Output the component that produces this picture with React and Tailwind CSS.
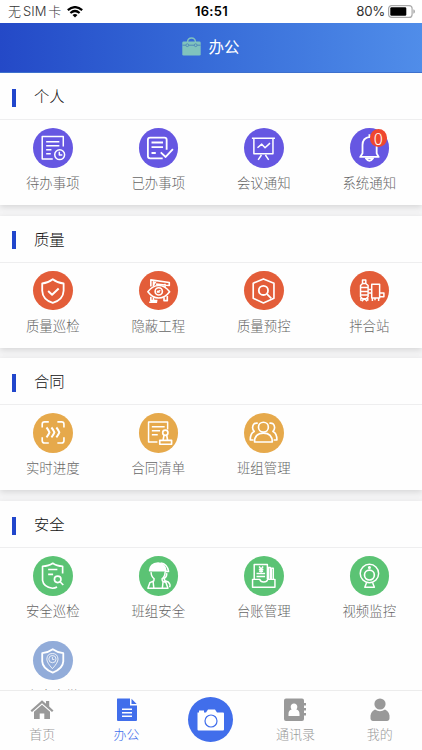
import React, { useState } from 'react';

// Every glyph is drawn on a 120x120 grid, inside its coloured disc
const glyphs = {
	todo: (
		<>
			<path d="M92 56V26H28v68h32M40 42h40M40 54h40M40 66h16M40 78h14" />
			<circle cx="81" cy="81" r="15" />
			<path d="M80 72v10h9" />
		</>
	),
	done: (
		<>
			<path
				d="M84 66V36q0-7-7-7H34q-7 0-7 7v49q0 7 7 7h38M38 44h35M38 58h35M38 76h13"
				strokeWidth="5.500"
			/>
			<path d="M66 74l15 14 22-24" strokeWidth="5.500" />
		</>
	),
	meeting: (
		<>
			<path d="M24 31h70M30 31v47h58V31M53 82L43 97M65 82l10 15" />
			<path d="M41 60l13-11 10 11 15-14" />
		</>
	),
	bell: (
		<>
			<path
				d="M31 88h56l-6-11V52q0-22-21-25-22 3-22 25v25zM59 27v-8"
				strokeWidth="5.500"
			/>
			<path d="M48 92q11 16 22 0z" strokeWidth="5.500" />
		</>
	),
	shieldCheck: (
		<>
			<path
				d="M60 25Q46 36 28 38v22q1 27 32 37 32-10 33-37V38Q74 36 60 25z"
				strokeWidth="5.500"
			/>
			<path d="M46 61l12 11 20-19" strokeWidth="6" />
		</>
	),
	hidden: (
		<>
			<path
				d="M36 47V27l56 8v9l-40-4M44 29v17M79 39v10M36 78v12h20M44 80v15M31 95h24M76 80v10h10V76M45 41l8-13"
				strokeWidth="5"
			/>
			<path d="M27 63q14-19 33-19t33 19q-14 19-33 19T27 63z" fill="#e35d39" strokeWidth="5" />
			<circle cx="60" cy="62" r="11" strokeWidth="5" />
			<path d="M54 65l11-6M56 60l6 6" />
		</>
	),
	control: (
		<>
			<path d="M59 24l32 13v46L59 97 28 83V37z" strokeWidth="5" />
			<circle cx="59" cy="59" r="14" strokeWidth="5.500" />
			<path d="M70 70l13 13" strokeWidth="5.500" />
		</>
	),
	station: (
		<>
			<path d="M38 38V27h10v11M32 44l6-6h10l7 6v34l-6 6H38l-6-6zM32 50h23M32 62h23M32 73h23M33 82v8M43 84l-7 8M44 84l8 8M54 82v8" />
			<path d="M66 40h24v42H66zM56 56h8M56 67h8M92 67h11v11H92M68 84v7M76 84v5M87 84v7" />
		</>
	),
	progress: (
		<>
			<path
				d="M28 44V34q0-7 7-7h13M74 27h13q7 0 7 7v10M94 74v10q0 7-7 7H74M48 91H35q-7 0-7-7V74"
				strokeWidth="5"
			/>
			<path
				d="M41 44q6 7 9 15-3 8-9 15M56 44q6 7 9 15-3 8-9 15M71 44q6 7 9 15-3 8-9 15"
				strokeWidth="6"
			/>
		</>
	),
	contract: (
		<>
			<path d="M87 50V27H29v61h27M39 42h39M39 54h25M39 66h18" />
			<circle cx="80" cy="60" r="8" strokeWidth="5" />
			<path d="M76 67l-3 16M84 67l3 16M63 83h36v12H63z" strokeWidth="5" />
		</>
	),
	team: (
		<g strokeWidth="5">
			<circle cx="59" cy="43" r="15" />
			<path d="M32 88q0-27 27-27t27 27zM42 31q-15-2-16 13 0 7 5 12-12 5-12 26h10M77 31q15-2 16 13 0 7-5 12 12 5 12 26H90" />
		</g>
	),
	shieldSearch: (
		<g strokeWidth="5">
			<path d="M90 53V31q-18 0-30-9-12 9-31 9v43q3 20 30 24 8-1 14-4M46 41h28M46 56h15" />
			<circle cx="75" cy="71" r="10" />
			<path d="M83 79l9 9" />
		</g>
	),
	workers: (
		<>
			<path d="M32 45q1-22 26-24 22 2 24 24z" fill="white" />
			<path d="M66 21q20 2 24 26H78M37 49q-1 12 9 20l-1 7-12 5-6 17h61l-6-17-11-5-1-7q10-8 9-20M84 52q2 10-8 17l3 6 10 4q8 8 4 16M43 79l2 18M73 79l-2 18" />
		</>
	),
	ledger: (
		<>
			<path d="M31 70V26h40v44M74 70V35h6v35M83 70V37h6v33M38 53h26M38 62h26M46 32l6 8 6-8M45 41h14M46 46h12M52 39v11" />
			<path d="M26 71h22q2 8 12 8t12-8h22v24H26z" />
		</>
	),
	camera: (
		<>
			<circle cx="59" cy="53" r="28" />
			<circle cx="59" cy="58" r="15" strokeWidth="5" />
			<circle cx="59" cy="35" r="2.500" />
			<path d="M50 82l-5 13h29l-5-13" />
		</>
	),
	attendance: (
		<>
			<path
				d="M60 25q-14 10-32 12v25q1 22 32 34 31-12 32-34V37Q74 35 60 25z"
				strokeWidth="5.500"
			/>
			<path d="M59 84Q42 66 42 55q1-17 17-17t17 17q0 11-17 29z" strokeWidth="2.500" />
			<circle cx="59" cy="55" r="11" strokeWidth="2.500" />
			<path d="M59 48v8h6" strokeWidth="2.500" />
		</>
	),
};

const sections = [
	{
		title: '个人',
		color: 'bg-[#6657e2]',
		items: [
			{ label: '待办事项', icon: 'todo' },
			{ label: '已办事项', icon: 'done' },
			{ label: '会议通知', icon: 'meeting' },
			{ label: '系统通知', icon: 'bell', badge: 0 },
		],
	},
	{
		title: '质量',
		color: 'bg-[#e35d39]',
		items: [
			{ label: '质量巡检', icon: 'shieldCheck' },
			{ label: '隐蔽工程', icon: 'hidden' },
			{ label: '质量预控', icon: 'control' },
			{ label: '拌合站', icon: 'station' },
		],
	},
	{
		title: '合同',
		color: 'bg-[#e6a94b]',
		items: [
			{ label: '实时进度', icon: 'progress' },
			{ label: '合同清单', icon: 'contract' },
			{ label: '班组管理', icon: 'team' },
		],
	},
	{
		title: '安全',
		color: 'bg-[#5bc374]',
		items: [
			{ label: '安全巡检', icon: 'shieldSearch' },
			{ label: '班组安全', icon: 'workers' },
			{ label: '台账管理', icon: 'ledger' },
			{ label: '视频监控', icon: 'camera' },
			{ label: '安全考勤', icon: 'attendance', color: 'bg-[#92acd9]' },
		],
	},
];

const tabs = [
	{
		label: '首页',
		icon: (
			<>
				<path d="M.5 12.500L12 2.300l4 3.400V3h3.200v5.500l4.300 4-1.500 1.500L12 5.200 2 14z" />
				<path d="M12 6.800l8 6.900V21h-5.700v-5.500H9.700V21H4v-7.300z" />
			</>
		),
	},
	{
		label: '办公',
		icon: (
			<path
				fillRule="evenodd"
				d="M2.500.5H15v7h7V22q0 1-1 1H3q-1 0-1-1V1.500q0-1 .5-1zM16.500.8L21.700 6h-5.200zM7 10.500V12h10v-1.500zM7 14v1.500h10V14zM7 17.500V19h10v-1.500z"
			/>
		),
	},
	{ label: '拍照', main: true },
	{
		label: '通讯录',
		icon: (
			<path
				fillRule="evenodd"
				d="M3 .5h16q2 0 2 2V5h2v2.500h-2V10h2v2.500h-2V15h2v2.500h-2V21q0 2-2 2H3q-2 0-2-2V2.500q0-2 2-2zM11 5.500c-2 0-3.300 1.500-3.300 3.300 0 1.200.4 2 1 2.700C6.500 12 5.500 13.500 5.500 16v2h11v-2c0-2.500-1-4-3.200-4.500.6-.7 1-1.500 1-2.700C14.300 7 13 5.500 11 5.500z"
			/>
		),
	},
	{
		label: '我的',
		icon: (
			<>
				<circle cx="12" cy="6" r="5.600" />
				<path d="M7 11.500q5 3.500 10 0c3.500 1.500 5 4.500 4.500 9-.2 1.600-1 2.500-2.500 2.500H5c-1.500 0-2.300-.9-2.500-2.500C2 16 3.500 13 7 11.500z" />
			</>
		),
	},
];

function StatusBar() {
	return (
		<div className="h-[23px] shrink-0 grid grid-cols-3 items-center pl-2 pr-[7px] bg-white text-[#333] text-[13px] leading-none">
			<div className="flex items-center gap-[6px]">
				<span className="flex gap-[2px] whitespace-nowrap font-light font-[Inter,'Noto_Sans_CJK_SC',sans-serif]">
					<span>无</span>
					<span>SIM</span>
					<span>卡</span>
				</span>
				<svg className="w-4 h-[12px]" viewBox="0 0 16 12" fill="none" stroke="black" strokeWidth="2.200">
					<path d="M.8 4.200Q8-2 15.200 4.200M3.400 7Q8 3 12.600 7" />
					<path d="M8 11.500L5.500 9Q8 7 10.500 9z" fill="black" stroke="none" />
				</svg>
			</div>
			<div className="text-center font-semibold text-black tracking-[0.3px] font-[Inter,sans-serif]">
				16:51
			</div>
			<div className="flex items-center justify-end gap-[3px]">
				<span className="text-[13.300px] tracking-[-0.3px] font-[Inter,sans-serif]">80%</span>
				<svg className="w-[27px] h-[13px]" viewBox="0 0 27 13">
					<rect x=".6" y=".6" width="23.500" height="11.800" rx="3" fill="none" stroke="#aaa" strokeWidth="1.200" />
					<rect x="2.300" y="2.300" width="16" height="8.400" rx="1.200" />
					<path d="M25.300 4.300q1.700.5 1.700 2.200t-1.700 2.200z" fill="#aaa" />
				</svg>
			</div>
		</div>
	);
}

function Header() {
	return (
		<header className="h-[50px] shrink-0 flex items-center justify-center gap-[7px] pb-[2px] bg-linear-to-r from-[#2449c7] to-[#508de9] border-b border-[#3d70cd] text-white">
			<svg className="w-[19px] h-[19px]" viewBox="0 0 19 19">
				<path d="M5.500 5Q5.800 1 9.500 1t4 4" fill="none" stroke="#80c3bd" strokeWidth="1.300" />
				<rect x=".3" y="4.500" width="18.400" height="14" rx="1.300" fill="#80c3bd" />
				<path d="M.5 8.200h3.300m3 0h5.400m3 0h3.300" stroke="#4478b8" strokeWidth=".8" />
				<g fill="none" stroke="#4478b8" strokeWidth=".7">
					<circle cx="5.300" cy="8.200" r="1.400" />
					<circle cx="13.700" cy="8.200" r="1.400" />
				</g>
			</svg>
			<h1 className="text-[15.500px] leading-none">办公</h1>
		</header>
	);
}

function MenuItem({ item, color }) {
	return (
		<button className="flex flex-col items-center h-[84.500px]">
			<span className={`relative size-[39.500px] rounded-full ${item.color || color}`}>
				<svg
					className="size-full"
					viewBox="0 0 120 120"
					fill="none"
					stroke="white"
					strokeWidth="4.500"
					strokeLinejoin="round"
				>
					{glyphs[item.icon]}
				</svg>
				{item.badge !== undefined && (
					<span className="absolute top-[1px] left-[20px] size-[17.500px] rounded-full bg-[#ef472f] flex items-center justify-center text-white text-[17px] leading-none font-light">
						{item.badge}
					</span>
				)}
			</span>
			<span className="mt-[4.500px] text-[13.400px] leading-5 font-light text-[#666]">
				{item.label}
			</span>
		</button>
	);
}

function Section({ section }) {
	return (
		<section className="shrink-0 mb-[10.700px] bg-[#fefefe] shadow-[0_2px_6px_rgba(0,0,0,0.12)]">
			<div className="h-[47px] flex items-center pl-3 border-b border-[#eeeeef]">
				<span className="mt-[3px] w-1 h-[18px] bg-[#2146cc]" />
				<h2 className="-mt-px ml-[18px] text-[15.300px] leading-none font-light text-[#111]">
					{section.title}
				</h2>
			</div>
			<div className="grid grid-cols-4 pt-2 -mb-[7.500px]">
				{section.items.map((item) => (
					<MenuItem key={item.label} item={item} color={section.color} />
				))}
			</div>
		</section>
	);
}

function TabBar() {
	const [active, setActive] = useState('办公');

	return (
		<nav className="h-[60px] shrink-0 relative grid grid-cols-5 bg-[#fefefe] border-t border-[#ececec]">
			{tabs.map((tab) =>
				tab.main ? (
					<button key={tab.label} aria-label={tab.label} className="flex justify-center pt-[6px]">
						<span className="size-[45px] rounded-full bg-[#416eeb] flex items-center justify-center">
							<svg className="w-[28px] h-[24px]" viewBox="0 0 28 24">
								<path
									d="M.5 4.500h1.500V2.500h5v2h2l2-3h7l2 3h6q1 0 1 1v16q0 1-1 1h-24.500q-1 0-1-1z"
									fill="white"
								/>
								<circle cx="14" cy="13" r="6" fill="none" stroke="#416eeb" strokeWidth="1.200" />
							</svg>
						</span>
					</button>
				) : (
					<button
						key={tab.label}
						onClick={() => setActive(tab.label)}
						className={`flex flex-col items-center pt-[7px] ${
							active === tab.label ? 'text-[#416eeb]' : 'text-[#999]'
						}`}
					>
						<svg className="size-6" viewBox="0 0 24 24" fill="currentColor">
							{tab.icon}
						</svg>
						<span className="mt-[2px] text-[13px] leading-5 font-light">{tab.label}</span>
					</button>
				)
			)}
		</nav>
	);
}

function App() {
	return (
		<div className="w-full h-[750px] flex flex-col overflow-hidden bg-[#f4f4f5] font-['Noto_Sans_CJK_SC',sans-serif]">
			<StatusBar />
			<Header />
			<main className="flex-1 min-h-0 overflow-hidden flex flex-col">
				{sections.map((section) => (
					<Section key={section.title} section={section} />
				))}
			</main>
			<TabBar />
		</div>
	);
}

export default App;
